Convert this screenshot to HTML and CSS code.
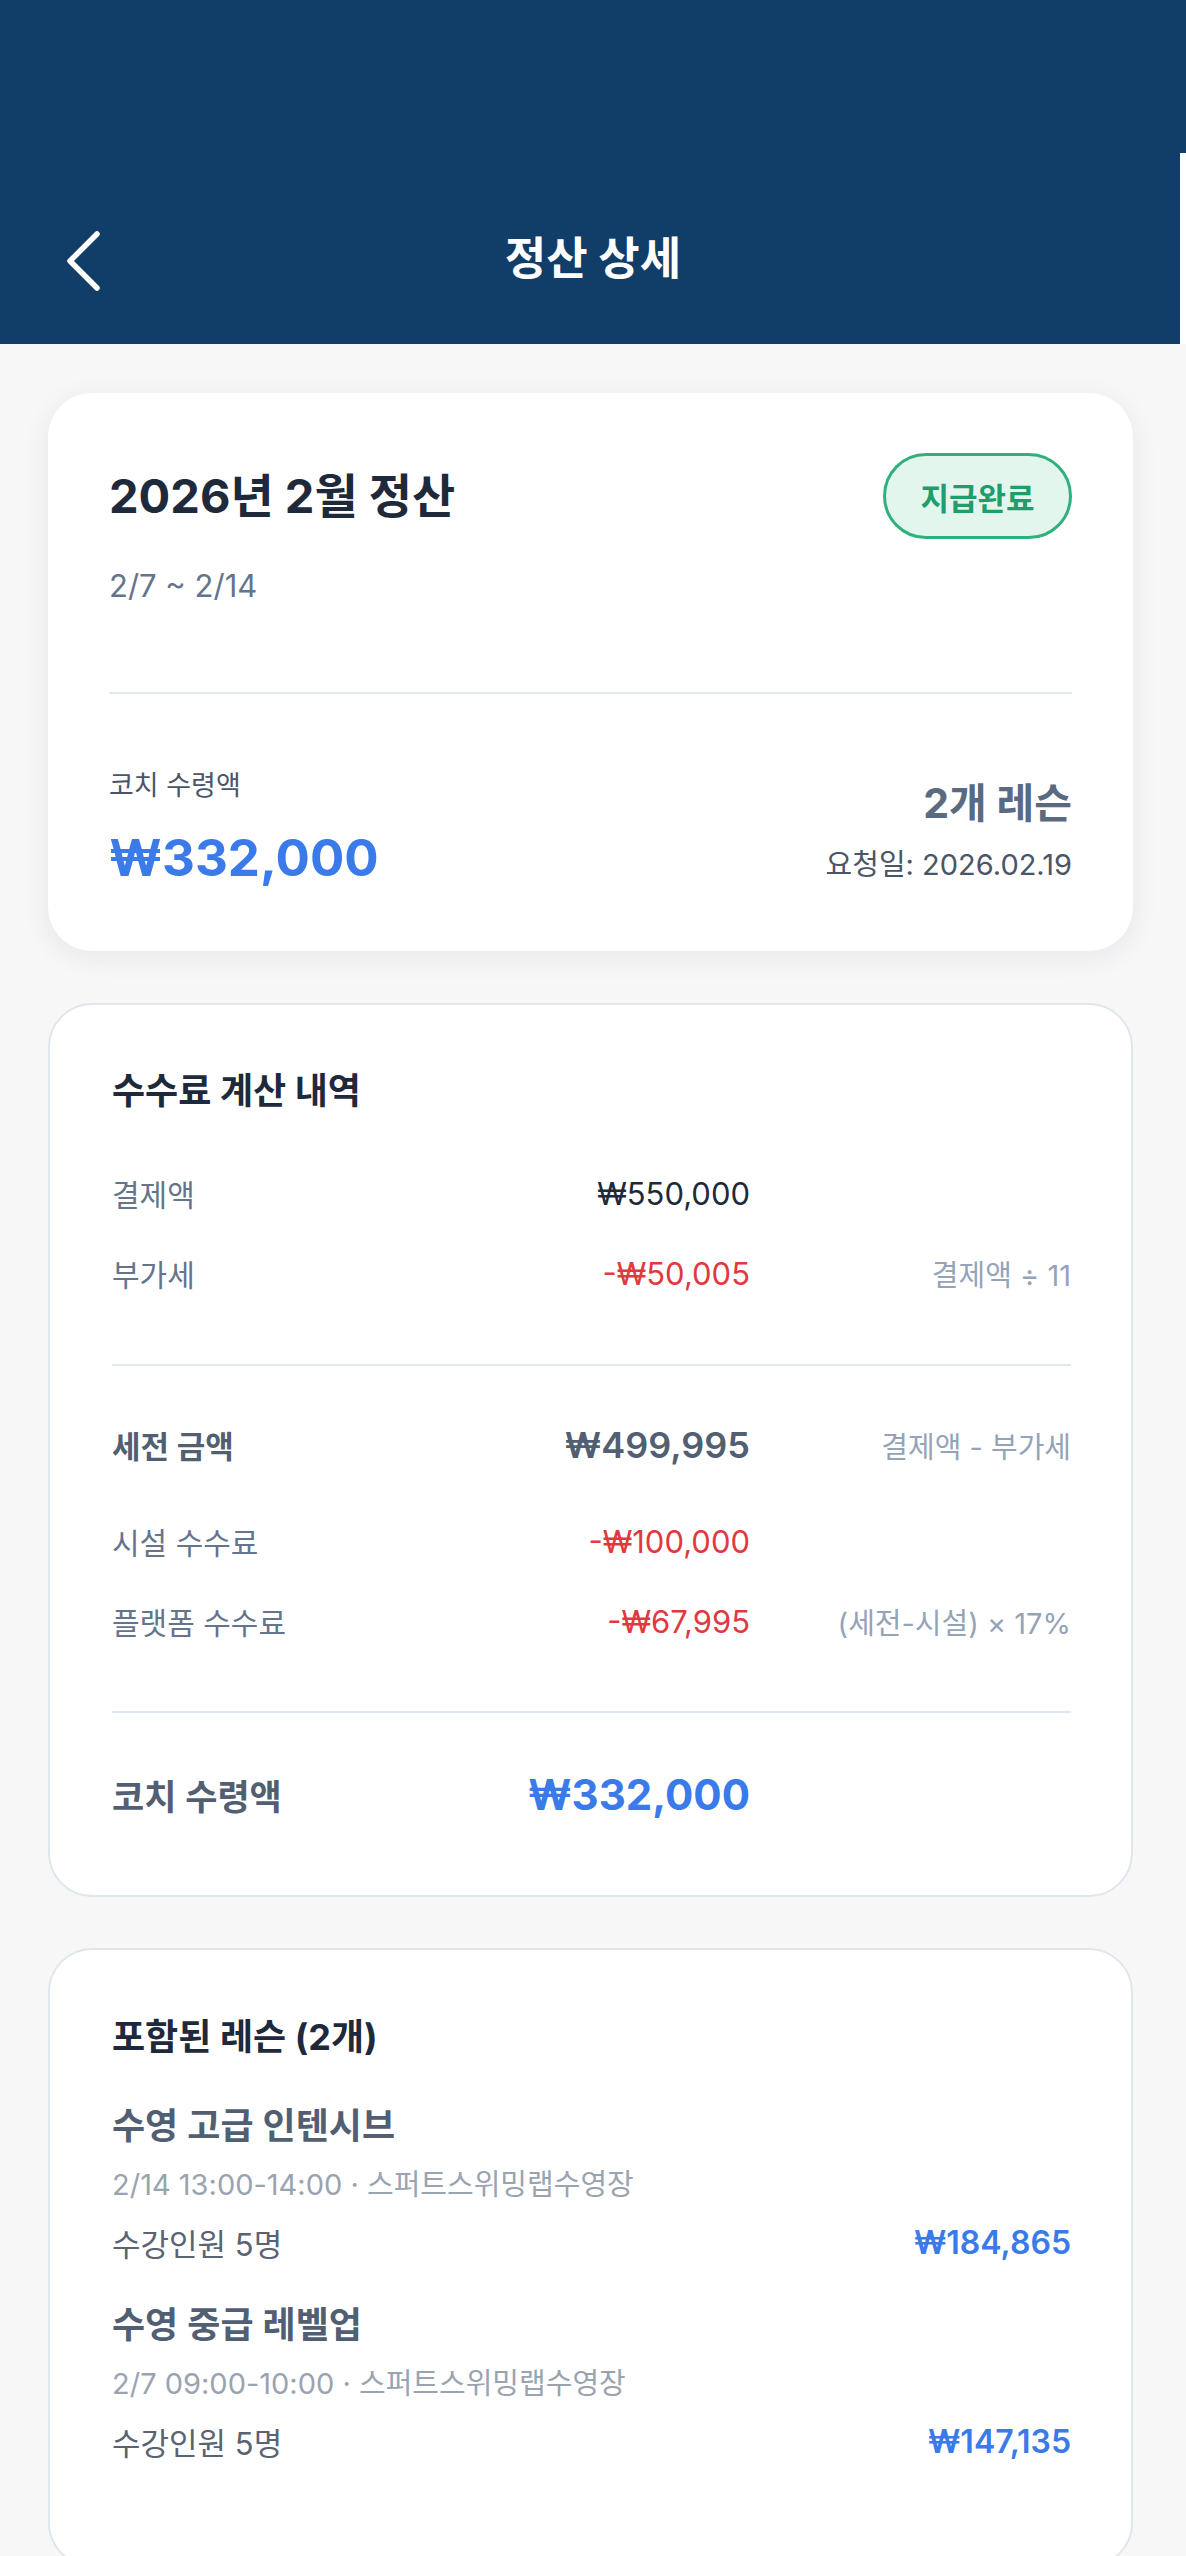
FILE: index.html
```html
<!DOCTYPE html>
<html lang="ko">
<head>
  <meta charset="UTF-8">
  <title>정산 상세</title>
  <link rel="stylesheet" href="styles.css">
</head>
<body>

<div class="screen">
  <header class="app-bar">
    <div class="app-bar-row">
      <button class="back-btn" aria-label="뒤로">
        <svg width="40" height="64" viewBox="0 0 40 64">
          <polyline points="35,5 8,32 35,59" fill="none" stroke="#fff" stroke-width="5.5" stroke-linecap="round" stroke-linejoin="round"/>
        </svg>
      </button>
      <h1 class="app-title">정산 상세</h1>
      <span class="app-bar-spacer"></span>
    </div>
    <div class="edge-strip"></div>
  </header>

  <main class="content">
    <!-- 요약 카드 -->
    <section class="card summary-card">
      <div class="summary-head">
        <h2 class="summary-title">2026년 2월 정산</h2>
        <span class="status-badge">지급완료</span>
      </div>
      <p class="summary-period">2/7 ~ 2/14</p>
      <hr class="divider summary-divider">
      <div class="summary-foot">
        <div class="summary-main">
          <p class="summary-label">코치 수령액</p>
          <p class="summary-amount">₩332,000</p>
        </div>
        <div class="summary-side">
          <p class="lesson-count">2개 레슨</p>
          <p class="request-date">요청일: 2026.02.19</p>
        </div>
      </div>
    </section>

    <!-- 수수료 계산 -->
    <section class="card bordered fee-card">
      <h3 class="card-heading">수수료 계산 내역</h3>

      <div class="fee-row first">
        <span class="fee-label">결제액</span>
        <span class="fee-value">₩550,000</span>
        <span class="fee-note"></span>
      </div>
      <div class="fee-row">
        <span class="fee-label">부가세</span>
        <span class="fee-value minus">-₩50,005</span>
        <span class="fee-note">결제액 ÷ 11</span>
      </div>

      <hr class="divider fee-divider first-divider">

      <div class="fee-row subtotal">
        <span class="fee-label">세전 금액</span>
        <span class="fee-value">₩499,995</span>
        <span class="fee-note">결제액 - 부가세</span>
      </div>
      <div class="fee-row after-subtotal">
        <span class="fee-label">시설 수수료</span>
        <span class="fee-value minus">-₩100,000</span>
        <span class="fee-note"></span>
      </div>
      <div class="fee-row">
        <span class="fee-label">플랫폼 수수료</span>
        <span class="fee-value minus">-₩67,995</span>
        <span class="fee-note">(세전-시설) × 17%</span>
      </div>

      <hr class="divider fee-divider">

      <div class="fee-row total">
        <span class="fee-label">코치 수령액</span>
        <span class="fee-value">₩332,000</span>
        <span class="fee-note"></span>
      </div>
    </section>

    <!-- 포함된 레슨 -->
    <section class="card bordered lesson-card">
      <h3 class="card-heading">포함된 레슨 (2개)</h3>

      <div class="lesson">
        <p class="lesson-title">수영 고급 인텐시브</p>
        <p class="lesson-meta">2/14 13:00-14:00 · 스퍼트스위밍랩수영장</p>
        <div class="lesson-row">
          <span class="lesson-people">수강인원 5명</span>
          <span class="lesson-amount">₩184,865</span>
        </div>
      </div>

      <div class="lesson">
        <p class="lesson-title">수영 중급 레벨업</p>
        <p class="lesson-meta">2/7 09:00-10:00 · 스퍼트스위밍랩수영장</p>
        <div class="lesson-row">
          <span class="lesson-people">수강인원 5명</span>
          <span class="lesson-amount">₩147,135</span>
        </div>
      </div>
    </section>
  </main>
</div>

</body>
</html>
```

FILE: styles.css
```css
* {
  box-sizing: border-box;
}

body {
  margin: 0;
  font-family: "Inter", "Noto Sans CJK KR", sans-serif;
  background: #f7f7f8;
  color: #1e293b;
}

p, h1, h2, h3 {
  margin: 0;
}

.screen {
  height: 2556px;
  overflow: hidden;
}

/* 상단 바 */
.app-bar {
  position: relative;
  height: 344px;
  background: #113d69;
  display: flex;
  align-items: flex-end;
}

.app-bar-row {
  width: 100%;
  height: 166px;
  display: grid;
  grid-template-columns: 160px 1fr 160px;
  align-items: center;
}

.back-btn {
  width: 40px;
  height: 64px;
  margin-left: 62px;
  padding: 0;
  border: none;
  background: none;
  display: flex;
}

.app-title {
  text-align: center;
  color: #fff;
  font-size: 45px;
  font-weight: 700;
  line-height: 56px;
  margin-top: -4px;
}

.edge-strip {
  position: absolute;
  right: 0;
  top: 153px;
  width: 6px;
  height: 191px;
  background: #fff;
}

/* 본문 */
.content {
  padding: 49px 53px 0 48px;
  display: flex;
  flex-direction: column;
}

.card {
  background: #fff;
  border-radius: 44px;
}

.bordered {
  border: 2px solid #dfe6ee;
}

.divider {
  margin: 0;
  border: none;
  height: 2px;
  background: #e2e8f0;
}

/* 요약 카드 */
.summary-card {
  padding: 60px 61px 61px 61px;
  box-shadow: 0 6px 28px rgba(15, 23, 42, 0.07);
}

.summary-head {
  height: 86px;
  display: flex;
  justify-content: space-between;
  align-items: center;
}

.summary-title {
  font-size: 47px;
  font-weight: 700;
  line-height: 60px;
  color: #1e293b;
}

.status-badge {
  width: 189px;
  height: 86px;
  border: 3px solid #2fb07c;
  border-radius: 43px;
  background: #e3f6ee;
  color: #1f9d6b;
  font-size: 31px;
  font-weight: 700;
  display: flex;
  justify-content: center;
  align-items: center;
}

.summary-period {
  margin-top: 26px;
  font-size: 31px;
  line-height: 42px;
  color: #64748b;
}

.summary-divider {
  margin-top: 85px;
}

.summary-foot {
  margin-top: 74px;
  display: flex;
  justify-content: space-between;
  align-items: flex-end;
}

.summary-label {
  font-size: 27px;
  line-height: 36px;
  color: #4a5568;
}

.summary-amount {
  margin-top: 21px;
  font-size: 51px;
  font-weight: 700;
  line-height: 65px;
  color: #3a7be9;
}

.summary-side {
  margin-bottom: 6px;
  display: flex;
  flex-direction: column;
  align-items: flex-end;
  gap: 17px;
}

.lesson-count {
  font-size: 41px;
  font-weight: 700;
  line-height: 52px;
  color: #5a6a80;
}

.request-date {
  font-size: 29px;
  line-height: 38px;
  color: #4a5568;
}

/* 수수료 카드 */
.fee-card {
  margin-top: 52px;
  padding: 64px 60px 73px 62px;
}

.card-heading {
  font-size: 36px;
  font-weight: 700;
  line-height: 44px;
  color: #1e293b;
}

.fee-row {
  display: grid;
  grid-template-columns: 1fr 300px 321px;
  align-items: center;
  height: 40px;
  margin-top: 40px;
  font-size: 30px;
}

.fee-row.first {
  margin-top: 58px;
}

.fee-label {
  color: #64748b;
}

.fee-value {
  justify-self: end;
  font-size: 31px;
  color: #1e293b;
}

.fee-value.minus {
  color: #e0393e;
}

.fee-note {
  justify-self: end;
  font-size: 29px;
  color: #94a3b8;
}

.fee-divider {
  margin-top: 72px;
}

.fee-divider.first-divider {
  margin-top: 73px;
}

.fee-row.subtotal {
  height: 44px;
  margin-top: 56px;
  font-size: 31px;
  font-weight: 600;
}

.fee-row.subtotal .fee-label,
.fee-row.subtotal .fee-value {
  color: #525f73;
}

.fee-row.subtotal .fee-value {
  font-size: 36px;
}

.fee-row.subtotal .fee-note {
  font-weight: 400;
}

.fee-row.after-subtotal {
  margin-top: 53px;
}

.fee-row.total {
  height: 56px;
  margin-top: 53px;
  font-size: 35px;
  font-weight: 600;
}

.fee-row.total .fee-label {
  color: #525f73;
}

.fee-row.total .fee-value {
  font-size: 42px;
  font-weight: 700;
  color: #3a7be9;
}

/* 레슨 카드 */
.lesson-card {
  margin-top: 51px;
  padding: 65px 60px 104px 62px;
  flex-shrink: 0;
}

.lesson {
  margin-top: 41px;
}

.lesson:first-of-type {
  margin-top: 45px;
}

.lesson-title {
  font-size: 36px;
  font-weight: 600;
  line-height: 44px;
  color: #525f73;
}

.lesson-meta {
  margin-top: 19px;
  font-size: 29px;
  line-height: 36px;
  color: #9aa3b0;
}

.lesson-row {
  margin-top: 19px;
  height: 40px;
  display: flex;
  justify-content: space-between;
  align-items: center;
}

.lesson-people {
  font-size: 31px;
  color: #5a6372;
}

.lesson-amount {
  font-size: 32px;
  font-weight: 600;
  color: #3a7be9;
}
```
